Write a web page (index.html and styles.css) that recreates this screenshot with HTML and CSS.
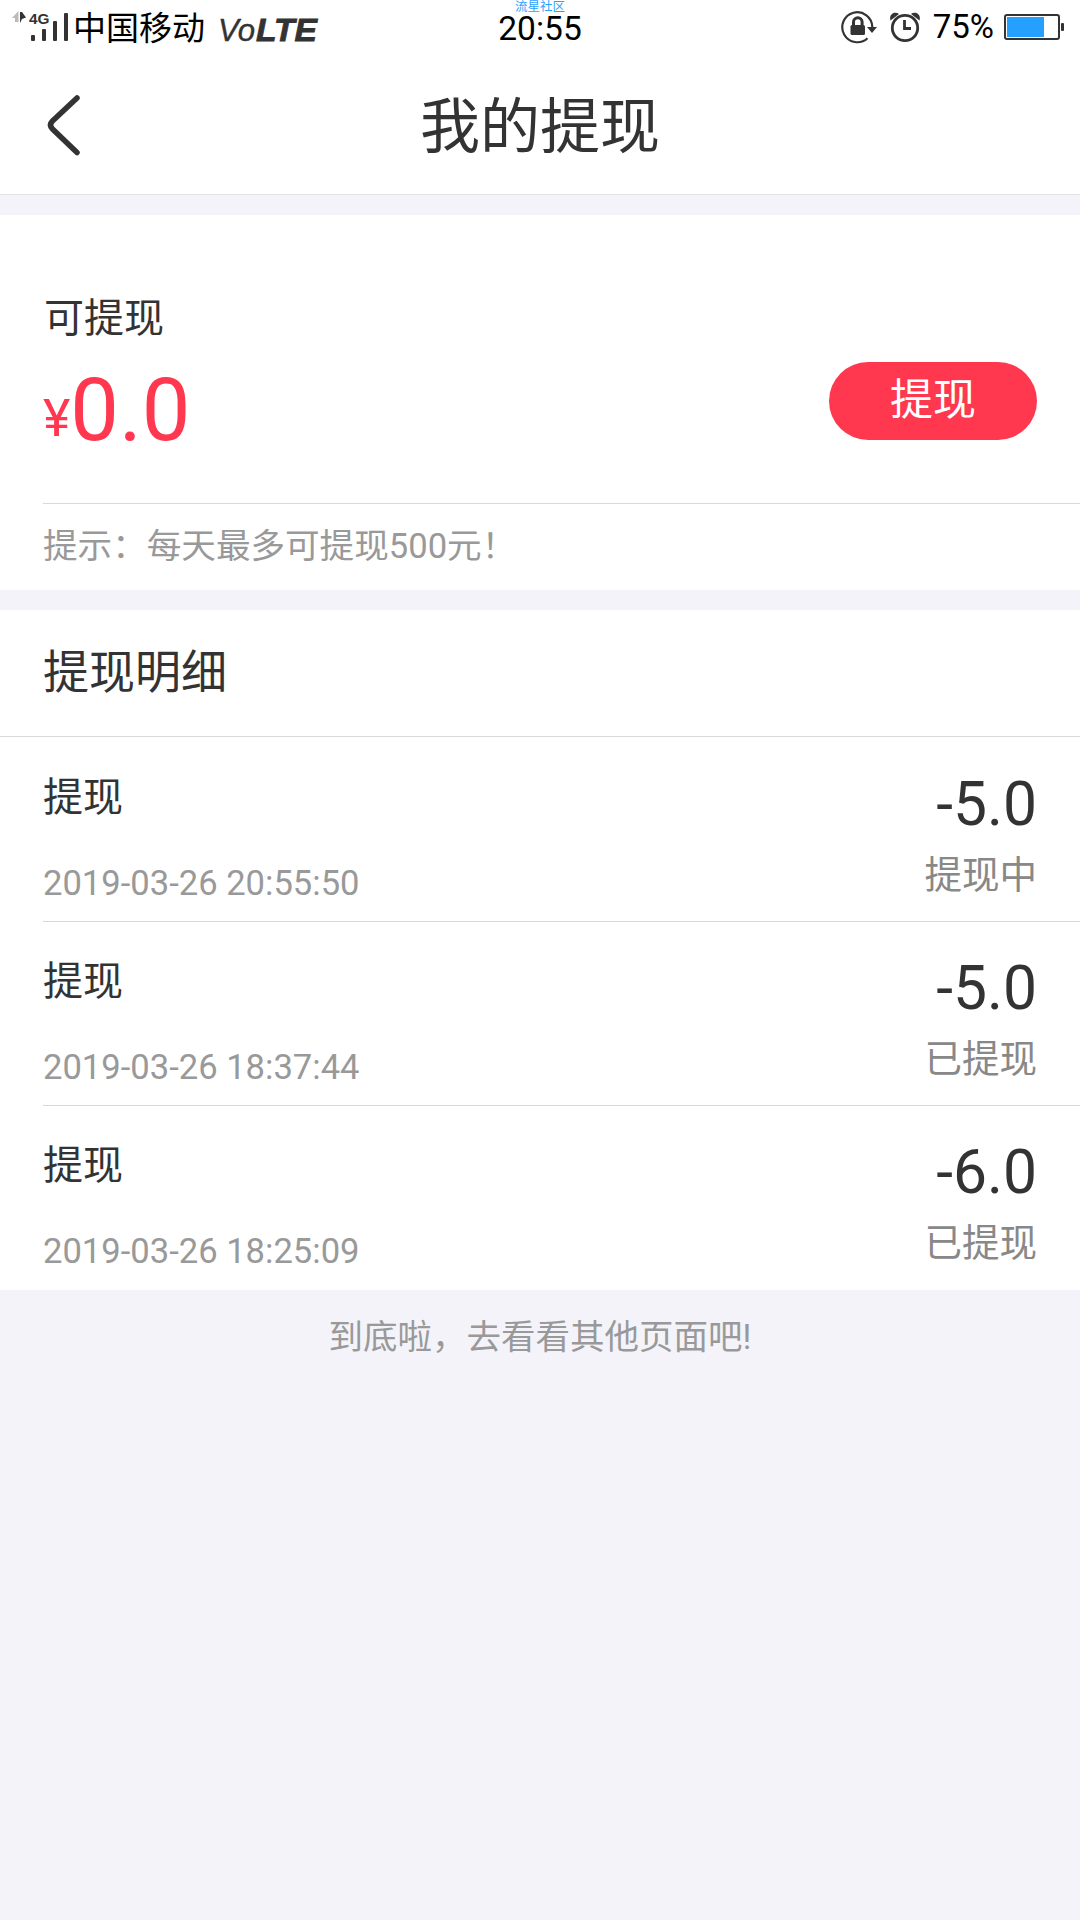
FILE: index.html
```html
<!DOCTYPE html>
<html lang="zh-CN">
<head>
<meta charset="utf-8">
<title>我的提现</title>
<link rel="stylesheet" href="styles.css">
</head>
<body>
<div class="statusbar">
  <div class="status-left">
    <svg class="signal" width="72" height="54" viewBox="0 0 72 54">
      <path d="M18.500 11v11h-3.500v-4h-3z" fill="#bbb"/>
      <path d="M20 12h2l4 5.500-4 1.500-2 4z" fill="#333"/>
      <text x="29" y="24" class="net" textLength="20.5" lengthAdjust="spacingAndGlyphs">4G</text>
      <g fill="#333"><rect x="31" y="35" width="4" height="6" rx="1"/><rect x="42" y="29" width="4" height="12" rx="1"/><rect x="53" y="21" width="4" height="20" rx="1"/><rect x="64" y="13" width="4" height="28" rx="1"/></g>
    </svg>
    <span class="carrier">中国移动</span>
    <svg class="volte" width="104" height="54" viewBox="0 0 104 54">
      <text x="0" y="40.5" class="vo" textLength="37" lengthAdjust="spacingAndGlyphs">Vo</text>
      <text x="38" y="40.5" class="lte" textLength="61" lengthAdjust="spacingAndGlyphs">LTE</text>
    </svg>
  </div>
  <div class="status-center">
    <span class="community">流星社区</span>
    <span class="clock">20:55</span>
  </div>
  <div class="status-right">
    <svg width="36" height="54" viewBox="0 0 36 54" fill="none" stroke="#333" stroke-width="2.2">
      <path d="M26.5 38.2A15 15 0 1 1 31.3 27"/>
      <path d="M26 27h10L31 33z" fill="#333" stroke="none"/>
      <rect x="9.500" y="25" width="14.500" height="10" rx="1.500" fill="#333" stroke="none"/>
      <path d="M12.500 26v-4a4.300 4.300 0 0 1 8.600 0v4" stroke-width="3"/>
    </svg>
    <svg class="alarm" width="32" height="54" viewBox="0 0 32 54" fill="none" stroke="#333">
      <circle cx="16" cy="28" r="12.700" stroke-width="2.800"/>
      <path d="M15.500 20v8.500H22" stroke-width="2.800"/>
      <path d="M1.500 20.500C-.5 14 6 11 10 14zM30.500 20.500C32.500 14 26 11 22 14z" fill="#333" stroke="none"/>
    </svg>
    <span class="percent">75%</span>
    <svg class="battery" width="62" height="54" viewBox="0 0 62 54">
      <rect x="2" y="15" width="54" height="24" rx="2" fill="none" stroke="#333" stroke-width="2"/>
      <rect x="4" y="17" width="37" height="20" fill="#26a0ff"/>
      <rect x="58" y="23" width="3" height="8" rx="1" fill="#333"/>
    </svg>
  </div>
</div>

<header class="header">
  <svg class="back" width="40" height="70" viewBox="0 0 40 70"><path d="M34 8L9.500 31Q5.500 35 9.500 39L34 62.500" fill="none" stroke="#333" stroke-width="5.500" stroke-linecap="round"/></svg>
  <h1 class="title">我的提现</h1>
</header>

<section class="balance">
  <div class="balance-main">
    <div>
      <div class="balance-label">可提现</div>
      <div class="balance-amount"><span class="yen">¥</span>0.0</div>
    </div>
    <button class="withdraw">提现</button>
  </div>
  <div class="tip">提示：每天最多可提现500元！</div>
</section>

<section class="details">
  <h2 class="details-title">提现明细</h2>
  <ul class="list">
    <li class="row">
      <div class="row-left"><span class="name">提现</span><span class="date">2019-03-26 20:55:50</span></div>
      <div class="row-right"><span class="amount">-5.0</span><span class="state">提现中</span></div>
    </li>
    <li class="row">
      <div class="row-left"><span class="name">提现</span><span class="date">2019-03-26 18:37:44</span></div>
      <div class="row-right"><span class="amount">-5.0</span><span class="state">已提现</span></div>
    </li>
    <li class="row">
      <div class="row-left"><span class="name">提现</span><span class="date">2019-03-26 18:25:09</span></div>
      <div class="row-right"><span class="amount">-6.0</span><span class="state">已提现</span></div>
    </li>
  </ul>
</section>
<footer class="end">到底啦，去看看其他页面吧!</footer>
</body>
</html>
```
FILE: styles.css
```css
* { box-sizing: border-box; margin: 0; padding: 0; }
body {
  width: 1080px;
  min-height: 1920px;
  background: #f4f3f9;
  color: #333;
  font-family: Roboto, "Noto Sans CJK SC", sans-serif;
}
svg { display: block; flex: none; }

.statusbar {
  display: grid;
  grid-template-columns: 1fr auto 1fr;
  height: 54px;
  background: #fff;
  color: #000;
  overflow: hidden;
}
.status-left, .status-right { display: flex; }
.status-right { justify-content: flex-end; padding-right: 15px; }
.net { font: bold 15px "Liberation Sans", sans-serif; fill: #333; }
.carrier { margin-left: 1px; font-size: 33px; line-height: 57px; }
.volte { margin-left: 13px; }
.vo { font: italic 31px "Liberation Sans", sans-serif; fill: #333; stroke: #333; stroke-width: 0.4px; }
.lte { font: italic bold 31px "Liberation Sans", sans-serif; fill: #333; stroke: #333; stroke-width: 0.8px; }
.status-center { display: flex; flex-direction: column; align-items: center; }
.community { height: 12px; font-size: 12.5px; line-height: 13px; color: #2ba0ff; }
.clock { font-size: 33.5px; line-height: 34px; }
.alarm { margin-left: 12px; }
.percent { margin-left: 12px; font-size: 33px; line-height: 54px; }
.battery { margin-left: 9px; }

.header {
  display: grid;
  grid-template-columns: 120px 1fr 120px;
  align-items: center;
  height: 141px;
  padding-top: 6px;
  background: #fff;
  border-bottom: 1px solid #e3e3e3;
}
.back { margin: -4px 0 0 43px; }
.title { padding-top: 2px; text-align: center; font-size: 60px; font-weight: 400; line-height: 80px; }

.balance { margin-top: 20px; background: #fff; padding-left: 43px; }
.balance-main {
  display: flex;
  justify-content: space-between;
  height: 289px;
  padding: 83px 43px 0 0;
  border-bottom: 1px solid #d9d9d9;
}
.balance-label { font-size: 40px; line-height: 41px; padding-left: 1px; }
.balance-amount { margin-top: 29px; font-size: 86.5px; line-height: 86px; color: #ff3850; display: flex; }
.yen { font-size: 52px; line-height: 101px; height: 86px; }
.withdraw {
  width: 208px;
  height: 78px;
  margin-top: 64px;
  padding-bottom: 2px;
  border: 0;
  border-radius: 39px;
  background: #ff3850;
  color: #fff;
  font: 43px/76px Roboto, "Noto Sans CJK SC", sans-serif;
}
.tip { height: 86px; font-size: 34.6px; line-height: 85px; color: #999; }

.details { margin-top: 20px; background: #fff; }
.details-title {
  height: 127px;
  padding-left: 43px;
  border-bottom: 1px solid #d9d9d9;
  font-size: 46px;
  font-weight: 400;
  line-height: 124px;
}
.list { list-style: none; padding: 1px 0 0 43px; }
.row {
  display: flex;
  justify-content: space-between;
  height: 184px;
  padding-right: 43px;
  border-bottom: 1px solid #d9d9d9;
}
.row:last-child { border-bottom: 0; }
.row-left, .row-right { display: flex; flex-direction: column; }
.row-left { padding-top: 39px; gap: 47px; }
.row-right { padding-top: 37px; gap: 21px; align-items: flex-end; }
.name { font-size: 40px; line-height: 41px; }
.date { font-size: 34.6px; line-height: 36px; color: #999; }
.amount { font-size: 60.6px; line-height: 60px; }
.state { font-size: 37.5px; line-height: 38px; color: #888; }

.end { padding-top: 27px; text-align: center; font-size: 34.5px; line-height: 40px; color: #999; }
```
